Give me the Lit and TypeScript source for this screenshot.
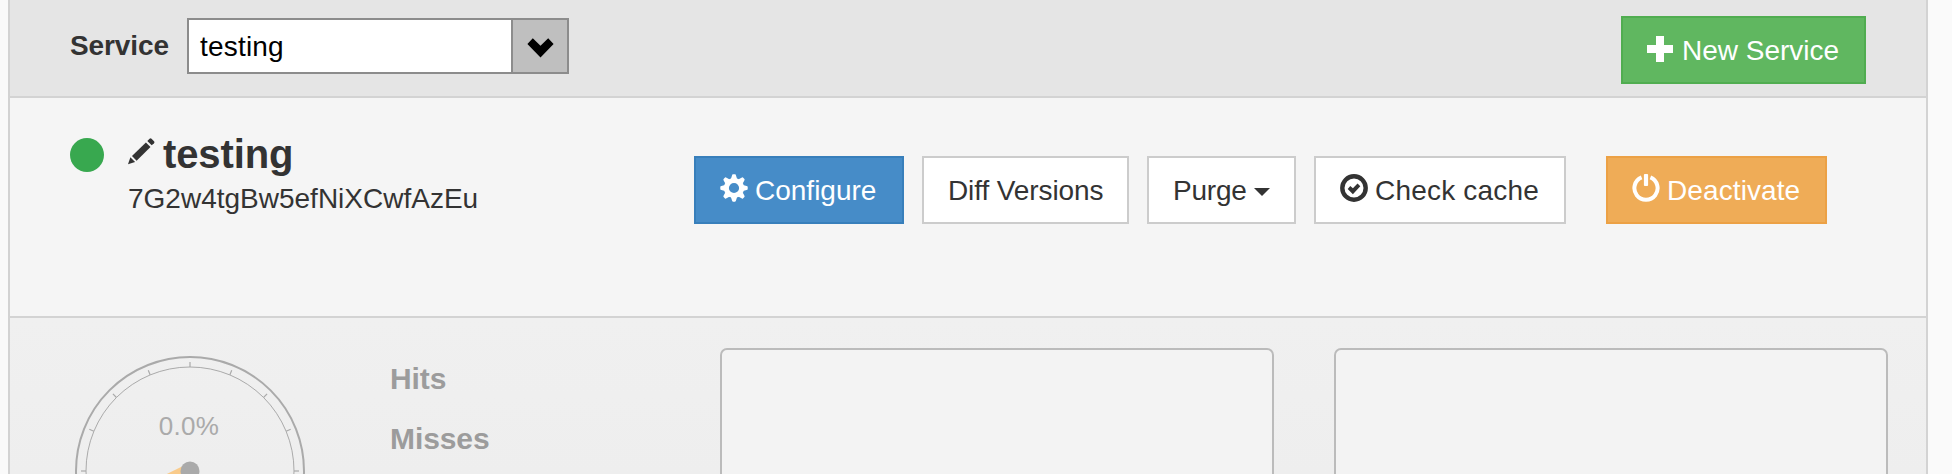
import { LitElement, html, svg, css } from "lit";
import { customElement } from "lit/decorators.js";

const plusIcon = html`<svg class="icon" width="28" height="28" viewBox="0 0 28 28">
  <path fill="currentColor" d="M10 1h8v9h9v8h-9v9h-8v-9H1v-8h9z" />
</svg>`;

const gearIcon = html`<svg class="icon" width="28" height="28" viewBox="-14 -14 28 28">
  <circle r="7.6" fill="none" stroke="currentColor" stroke-width="5" />
  ${[0, 45, 90, 135, 180, 225, 270, 315].map(
    (a) => svg`<path fill="currentColor" transform="rotate(${a})"
      d="M-3.1 -9L-2 -12.6Q-1.8 -13.7 -1 -13.7H1Q1.8 -13.7 2 -12.6L3.1 -9z" />`
  )}
</svg>`;

const checkIcon = html`<svg class="icon" width="28" height="28" viewBox="0 0 28 28">
  <circle cx="14" cy="14" r="11.7" fill="none" stroke="currentColor" stroke-width="4.4" />
  <path fill="currentColor" d="M7.7 14.9L10.3 12.1L12.9 14.3L17.5 9.4L20.3 12.3L12.9 20.3z" />
</svg>`;

const powerIcon = html`<svg class="icon" width="28" height="28" viewBox="0 0 28 28">
  <path fill="none" stroke="currentColor" stroke-width="4" d="M9.6 3.4A11.6 11.6 0 1 0 18.4 3.4" />
  <rect fill="currentColor" x="11.9" y="0" width="4.2" height="12" rx="1" />
</svg>`;

const pencilIcon = html`<svg class="icon" width="28" height="28" viewBox="0 0 28 28">
  <path fill="currentColor" d="M0 26.3L2.4 19.2L7.1 24z" />
  <path fill="currentColor" d="M4 18L17.9 4.6L22.5 8.9L8.6 22.7z" />
  <path fill="currentColor" d="M19.3 3L21.6 0.7Q22.6 -0.1 23.5 0.7L26 3.3Q26.9 4.3 26 5.2L23.7 7.3z" />
</svg>`;

@customElement("hit-gauge")
class HitGauge extends LitElement {
  static styles = css`
    :host { display: block; }
    .dial { display: block; }
    .value { font: 26px "Liberation Sans", Arial, sans-serif; letter-spacing: 0.3px; fill: #aaa; }
  `;
  render() {
    const ticks = [-90, -67.5, -45, -22.5, 0, 22.5, 45, 67.5, 90];
    return html`<svg class="dial" width="232" height="232" viewBox="-116 -116 232 232">
      <circle r="114" fill="none" stroke="#aaa" stroke-width="2" />
      <circle r="104" fill="none" stroke="#aaa" stroke-width="1" />
      ${ticks.map(
        (a) => svg`<line y1="-109" y2="-104" stroke="#aaa" stroke-width="1.2" transform="rotate(${a})" />`
      )}
      <text class="value" x="-1" y="-36" text-anchor="middle">0.0%</text>
      <path fill="#f9cb8b" d="M-7 -5L-76 29L-72 34L5 8z" />
      <circle r="9.5" fill="#aaa" />
    </svg>`;
  }
}

@customElement("app-root")
class AppRoot extends LitElement {
  static styles = css`
    :host {
      display: block;
      height: 474px;
      overflow: hidden;
      background: #fafafa;
      color: #333;
      font: 28px/40px "Liberation Sans", Arial, sans-serif;
    }
    * { box-sizing: border-box; }
    .panel {
      margin: 0 24px 0 8px;
      height: 474px;
      border: solid #d3d3d3;
      border-width: 0 2px;
      display: flex;
      flex-direction: column;
    }
    .bar {
      flex: none;
      height: 98px;
      padding: 16px 60px 0;
      border-bottom: 2px solid #d3d3d3;
      background: #e5e5e5;
      display: flex;
      align-items: flex-start;
    }
    .label { width: 117px; margin-top: 10px; font-weight: 700; letter-spacing: -0.1px; }
    .select {
      margin-top: 2px;
      width: 382px;
      height: 56px;
      border: 2px solid #8c8c8c;
      background: #fff;
      color: #000;
      display: flex;
    }
    .choice { flex: 1; padding: 7px 0 0 11px; letter-spacing: 0.2px; }
    .arrow {
      width: 56px;
      border-left: 2px solid #8c8c8c;
      background: #bfbfbf;
      padding: 18px 0 0 14px;
    }
    .arrow svg { display: block; }
    .btn {
      flex: none;
      height: 68px;
      border: 2px solid #ccc;
      background: #fff;
      padding: 13px 0 0 24px;
      display: flex;
      white-space: nowrap;
    }
    .icon { flex: none; display: block; margin: 3px 7px 0 0; }
    .new { width: 245px; margin-left: auto; background: #60b760; border-color: #50ad50; color: #fff; }
    .new .icon { margin: 4px 8px 0 -1px; }
    .configure { width: 210px; background: #468cc8; border-color: #387fbb; color: #fff; }
    .diff { width: 207px; letter-spacing: -0.1px; }
    .purge { width: 149px; letter-spacing: -0.2px; }
    .check { width: 252px; letter-spacing: 0.2px; }
    .deactivate { width: 221px; margin-left: 22px; background: #efac57; border-color: #eca145; color: #fff; letter-spacing: 0.1px; }
    .caret {
      margin: 17px 0 0 7px;
      width: 0;
      height: 0;
      border: 8px solid transparent;
      border-top-color: #333;
      border-bottom: 0;
    }
    .detail {
      flex: none;
      height: 220px;
      padding: 0 99px 0 60px;
      border-bottom: 2px solid #d3d3d3;
      background: #f5f5f5;
      display: flex;
    }
    .status { flex: none; width: 34px; height: 34px; margin-top: 40px; border-radius: 50%; background: #38a84f; }
    .name { margin: 34px 0 0 24px; }
    .title { display: flex; height: 48px; font-size: 40px; line-height: 44px; font-weight: 700; letter-spacing: -0.1px; }
    .title .icon { margin: 6px 7px 0 0; }
    .key { margin-top: -1px; }
    .actions { display: flex; gap: 18px; margin: 58px 0 0 auto; }
    .stats {
      flex: 1;
      min-height: 0;
      padding-left: 64px;
      background: linear-gradient(#f0f0f0, #eee);
      overflow: hidden;
      display: flex;
      align-items: flex-start;
    }
    hit-gauge { flex: none; margin-top: 36.5px; }
    .labels {
      flex: none;
      width: 330px;
      margin: 31px 0 0 84px;
      color: #9c9c9c;
      font-size: 30px;
      line-height: 60px;
      font-weight: 700;
      letter-spacing: -0.1px;
    }
    .chart {
      flex: none;
      width: 554px;
      height: 180px;
      margin: 30px 60px 0 0;
      border: 2px solid #bbb;
      border-radius: 7px;
      background: #f3f3f3;
    }
  `;
  render() {
    return html`<div class="panel">
      <div class="bar">
        <div class="label">Service</div>
        <div class="select">
          <div class="choice">testing</div>
          <div class="arrow">
            <svg width="28" height="20" viewBox="0 0 28 20">
              <path d="M0.4 6L5.8 0.2L13.5 7.8L21.2 0.2L26.6 6L13.5 19.4z" />
            </svg>
          </div>
        </div>
        <div class="btn new">${plusIcon}<span>New Service</span></div>
      </div>
      <div class="detail">
        <div class="status"></div>
        <div class="name">
          <div class="title">${pencilIcon}<span>testing</span></div>
          <div class="key">7G2w4tgBw5efNiXCwfAzEu</div>
        </div>
        <div class="actions">
          <div class="btn configure">${gearIcon}<span>Configure</span></div>
          <div class="btn diff"><span>Diff Versions</span></div>
          <div class="btn purge"><span>Purge</span><span class="caret"></span></div>
          <div class="btn check">${checkIcon}<span>Check cache</span></div>
          <div class="btn deactivate">${powerIcon}<span>Deactivate</span></div>
        </div>
      </div>
      <div class="stats">
        <hit-gauge></hit-gauge>
        <div class="labels">
          <div>Hits</div>
          <div>Misses</div>
        </div>
        <div class="chart"></div>
        <div class="chart"></div>
      </div>
    </div>`;
  }
}
